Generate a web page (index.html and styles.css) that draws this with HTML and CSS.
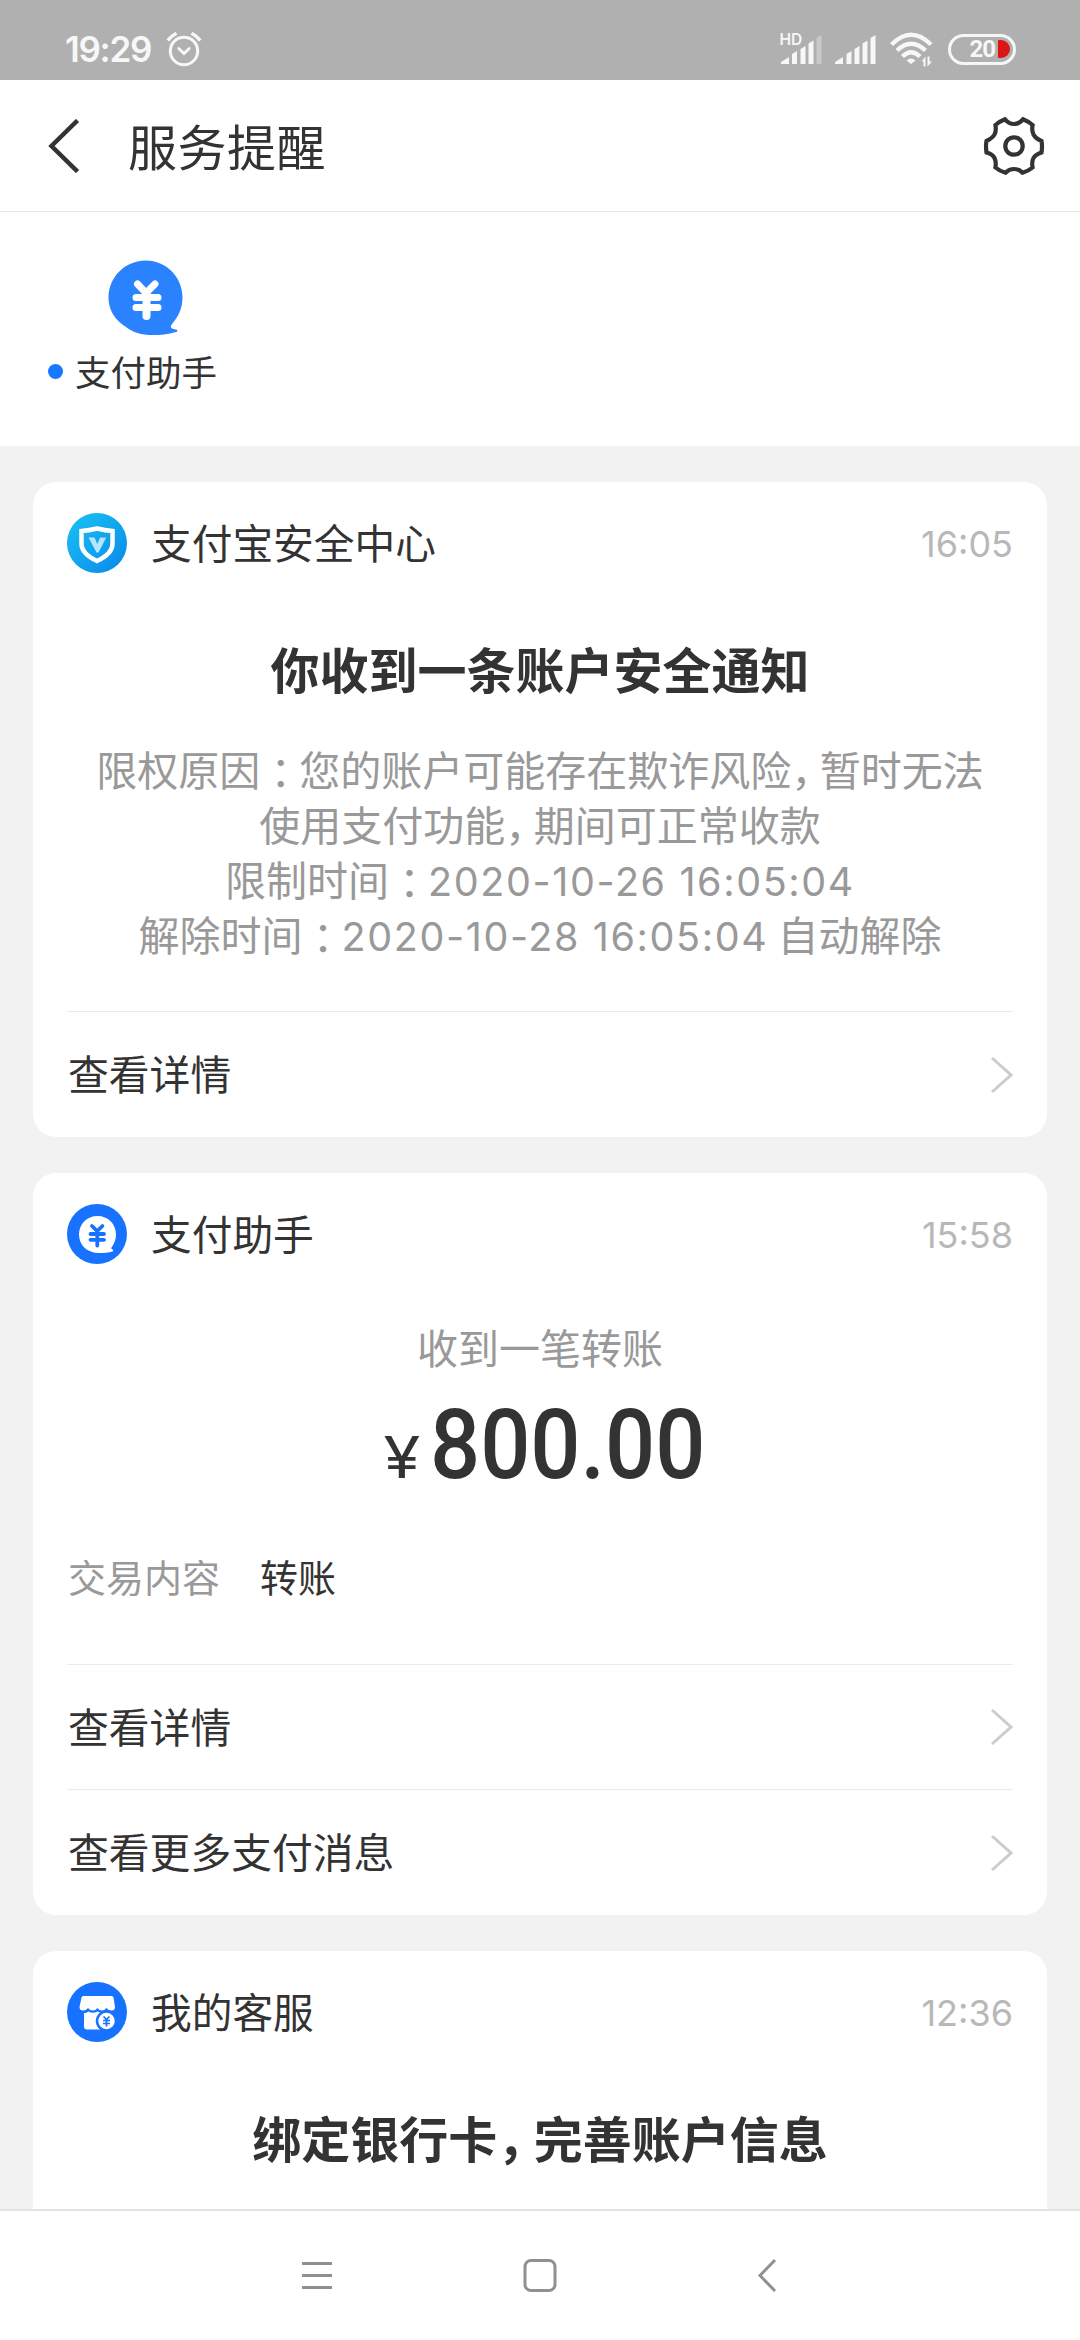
FILE: index.html
```html
<!DOCTYPE html>
<html lang="zh-CN">
<head>
<meta charset="utf-8">
<title>服务提醒</title>
<link rel="stylesheet" href="styles.css">
</head>
<body>
<div class="phone">
  <div class="status">
    <span class="clock">19:29</span>
    <svg class="alarm" width="36" height="36" viewBox="0 0 36 36" fill="none" stroke="#f7f7f7" stroke-width="3">
      <circle cx="18" cy="20" r="13.7"/><path d="M12.800 17.500l5.200 5 5.200-5" stroke-linecap="round"/><path d="M1.800 9.500Q5 5 10.500 2.200M34.200 9.500Q31 5 25.500 2.200" stroke-width="3.500"/>
    </svg>
    <div class="status-icons">
      <svg width="41" height="32" viewBox="0 0 41 32" fill="#f7f7f7">
        <path d="M1 31v-2l8-5v7zM12 31v-10l5-3v13zM20.500 31v-15l5-3v18zM28.500 31V10.500l5-3V31z"/><path d="M36.500 31V5l5-3v29z" opacity=".35"/>
        <text class="hd" x="-.500" y="12">HD</text>
      </svg>
      <svg width="41" height="32" viewBox="0 0 41 32" fill="#f7f7f7">
        <path d="M0 31v-2l8-5v7zM11.500 31v-10l5-3v13zM19.500 31v-15l5-3v18zM27.500 31V10.500l5-3V31zM35.500 31V5l5-3v29z"/>
      </svg>
      <svg class="wifi" width="43" height="35" viewBox="0 0 43 35" fill="none" stroke="#f7f7f7" stroke-width="4.300">
        <path d="M1.500 12.500Q21 -7 41 12.500M7 18.500Q21 5 35.500 18.500M12.500 24.500Q21 16 30 24.500"/>
        <path d="M16.500 28.500Q21 24.500 25.500 28.500L21 32z" fill="#f7f7f7" stroke="none"/>
        <path d="M31.500 29.500l4-5v10h-2v-5zM37.500 24.500h2v5h2.500l-4.500 5z" fill="#f7f7f7" stroke="none"/>
      </svg>
      <div class="battery"><span>20</span><i></i></div>
    </div>
  </div>

  <header class="bar">
    <svg width="32" height="54" viewBox="0 0 32 54" fill="none" stroke="#333" stroke-width="4.500"><path d="M29.500 1.500L3.500 27l26 25.500"/></svg>
    <h1>服务提醒</h1>
    <svg class="gear" width="64" height="64" viewBox="-32 -32 64 64" fill="none" stroke="#333" stroke-width="4.200">
      <circle r="8.700"/>
      <path d="M-9 -26.700Q-5 -22 0 -22T9 -26.700Q14.500 -24.500 18.600 -21Q17.500 -15.500 19.500 -11.500T27.500 -5Q28.500 0 27.500 6.500Q21.500 8.500 19.500 12T18.600 21.500Q14.500 25 8.500 26.700Q5 23 0 23T-8.500 26.700Q-14.500 25 -18.600 21.500Q-17.500 16 -19.500 12T-27.500 6.500Q-28.500 0 -27.500 -5Q-21.500 -8 -19.500 -11.500T-18.600 -21Q-14.500 -24.500 -9 -26.700z"/>
    </svg>
  </header>

  <section class="shortcuts">
    <div class="shortcut">
      <svg width="76" height="76" viewBox="0 0 76 76">
        <path fill="#2b82ff" d="M38 .500C58 .500 74.500 17 74.500 37.500c0 12-5 20-10.500 26.500-2.500 3.500-.500 5 4 5.500 2 .500 2 2 0 2.500C60 74.500 52 75 45 75 33 75 25 72.500 18 67 7 60 .500 50 .500 38 .500 17 17 .500 38 .500z"/>
        <path d="M29.500 24l8.500 9 9-9M28 37.500h22M28 47.500h22" fill="none" stroke="#fff" stroke-width="7" stroke-linecap="round"/>
        <path d="M38.500 33v23" fill="none" stroke="#fff" stroke-width="8" stroke-linecap="round"/>
      </svg>
      <div class="shortcut-label"><i class="dot"></i><span>支付助手</span></div>
    </div>
  </section>

  <main class="feed">
    <article class="card">
      <div class="card-head">
        <svg width="60" height="60" viewBox="0 0 60 60">
          <defs><linearGradient id="sky" x1="0" y1="0" x2="1" y2="1"><stop offset="0.100" stop-color="#18bdf3"/><stop offset="0.900" stop-color="#0b8eea"/></linearGradient></defs>
          <circle cx="30" cy="30" r="30" fill="url(#sky)"/>
          <path d="M30 15.500q8 2 15.500 2.500v13c0 8-7 13-15.500 17-8.500-4-15.500-9-15.500-17V18q7.500-.500 15.500-2.500z" fill="none" stroke="#fff" stroke-width="4.500"/>
          <path d="M21.500 24.500h6l2.700 6.500 3-6.500h6L31.500 39.500h-2z" fill="#b5e6ff"/>
        </svg>
        <h2>支付宝安全中心</h2><time>16:05</time>
      </div>
      <h3>你收到一条账户安全通知</h3>
      <p class="detail">限权原因<span class="colon" lang="zh-TW">：</span>您的账户可能存在欺诈风险<span class="comma">，</span>暂时无法<br>使用支付功能<span class="comma">，</span>期间可正常收款<br>限制时间<span class="colon" lang="zh-TW">：</span><span class="num">2020-10-26 16:05:04</span><br>解除时间<span class="colon" lang="zh-TW">：</span><span class="num">2020-10-28 16:05:04</span> 自动解除</p>
      <a class="row"><span>查看详情</span><svg class="chev" width="24" height="38" viewBox="0 0 24 38"><path d="M3 2l19 17L3 36"/></svg></a>
    </article>

    <article class="card">
      <div class="card-head">
        <svg width="60" height="60" viewBox="0 0 60 60">
          <circle cx="30" cy="30" r="30" fill="#1772ff"/>
          <path fill="#fff" d="M30.500 12C41 12 49 20 49 30.500c0 5.500-2 9.500-4.500 13-.500 1 0 1.500 1 2 1 .500 1 1.500 0 2C42 48.500 36 49 32 49 20 49 12 41 12 30.500 12 20 20 12 30.500 12z"/>
          <path d="M25 22l5.200 5 5.200-5M23.500 30h13.500M23.500 35.800h13.500M30.300 28v13.500" fill="none" stroke="#1772ff" stroke-width="3.800" stroke-linecap="round"/>
        </svg>
        <h2>支付助手</h2><time>15:58</time>
      </div>
      <p class="summary">收到一笔转账</p>
      <div class="amount"><span class="yen">¥</span><span class="sum">800.00</span></div>
      <dl><dt>交易内容</dt><dd>转账</dd></dl>
      <a class="row short"><span>查看详情</span><svg class="chev" width="24" height="38" viewBox="0 0 24 38"><path d="M3 2l19 17L3 36"/></svg></a>
      <a class="row"><span>查看更多支付消息</span><svg class="chev" width="24" height="38" viewBox="0 0 24 38"><path d="M3 2l19 17L3 36"/></svg></a>
    </article>

    <article class="card">
      <div class="card-head">
        <svg width="60" height="60" viewBox="0 0 60 60">
          <circle cx="30" cy="30" r="30" fill="#1772ff"/>
          <path fill="#fff" d="M16.500 14h28q1.500 0 2 1.500L48 25q0 3.500-3.500 3.500-3 0-5-2.500-2 2.500-4.700 2.500T30.500 26q-2 2.500-4.700 2.500T21 26q-2 2.500-5 2.500-3.500 0-3.500-3.500l2-9.500q.500-1.500 2-1.500z"/>
          <path fill="#fff" d="M17 31q2.500 0 4.500-1.500 4 2.500 9 0 4 2 8 1v17H20q-3 0-3-3z"/>
          <circle cx="39.500" cy="39" r="9.500" fill="#fff" stroke="#1772ff" stroke-width="2.500"/>
          <path d="M36.500 34.500l3 3 3-3M36 38.500h7M36 41.500h7M39.500 37.500v7" fill="none" stroke="#1772ff" stroke-width="1.700"/>
        </svg>
        <h2>我的客服</h2><time>12:36</time>
      </div>
      <h3>绑定银行卡<span class="comma">，</span>完善账户信息</h3>
    </article>
  </main>

  <nav class="keys">
    <svg width="34" height="36" viewBox="0 0 34 36"><path d="M2 5.500h30M2 17.500h30M2 29.500h30"/></svg>
    <svg width="34" height="36" viewBox="0 0 34 36"><rect x="2" y="2.500" width="30" height="30" rx="6"/></svg>
    <svg width="34" height="36" viewBox="0 0 34 36"><path d="M29 2L14 17.500l15 15.500"/></svg>
  </nav>
</div>
</body>
</html>
```

FILE: styles.css
```css
* { box-sizing: border-box; margin: 0; padding: 0; }
body { width: 1080px; font-family: "Noto Sans CJK SC", sans-serif; color: #333; background: #f2f2f2; }
svg { display: block; flex: none; }
h1, h2, h3 { font-weight: 400; white-space: nowrap; }
.phone { display: flex; flex-direction: column; width: 1080px; height: 2340px; overflow: hidden; }

.status { flex: none; display: flex; align-items: center; height: 80px; padding: 18px 64px 0 65px; background: #b0b0b0; color: #f7f7f7; }
.clock { width: 101px; font: 600 35px/40px Inter, sans-serif; letter-spacing: -1.3px; }
.status-icons { display: flex; align-items: center; margin-left: auto; }
.status-icons svg { margin-right: 14px; overflow: visible; }
.hd { font: 600 15.500px Inter, sans-serif; }
.status-icons .wifi { margin-right: 15px; }
.battery { display: flex; align-items: center; justify-content: flex-end; gap: 3px; width: 68px; height: 31px; padding-right: 3px; border: 3px solid #f7f7f7; border-radius: 16px; font: 700 24px/24px Roboto, sans-serif; letter-spacing: -1px; }
.battery i { width: 12px; height: 18px; background: #dc1515; border-radius: 1px 9px 9px 1px; }

.bar { flex: none; display: flex; align-items: center; height: 132px; padding: 0 34px 0 48px; background: #fff; border-bottom: 1px solid #e8e8e8; }
.bar h1 { margin: 0 0 2px 48px; font-size: 49px; line-height: 60px; letter-spacing: .5px; }
.gear { margin-left: auto; }

.shortcuts { flex: none; height: 234px; padding: 48px 0 0 48px; background: #fff; }
.shortcut { display: flex; flex-direction: column; width: 172px; }
.shortcut svg { margin-left: 60px; }
.shortcut-label { display: flex; align-items: center; gap: 12px; margin-top: 8px; font-size: 35.500px; line-height: 54px; white-space: nowrap; }
.dot { width: 15px; height: 15px; border-radius: 50%; background: #1677ff; }

.feed { flex: 1; display: flex; flex-direction: column; gap: 36px; min-height: 0; padding: 36px 33px 0; overflow: hidden; }
.card { flex: none; padding: 31px 34px 0; border-radius: 23px; background: #fff; }
.card-head { display: flex; align-items: center; height: 60px; }
.card-head h2 { margin-left: 24px; font-size: 40.700px; line-height: 56px; padding-bottom: 2px; }
.card-head time { margin: 2px 0 0 auto; font: 400 36px/60px Inter, sans-serif; color: #b8b8b8; }
.card h3 { height: 74px; margin-top: 58px; text-align: center; font-size: 49px; font-weight: 700; line-height: 74px; }
.card:last-child { height: 300px; }
.detail { height: 270px; margin-top: 36px; text-align: center; font-size: 41px; line-height: 55px; color: #999; white-space: nowrap; }
.colon { font-family: "Noto Sans CJK TC", sans-serif; line-height: 1px; vertical-align: -3px; letter-spacing: -2px; }
.comma { letter-spacing: -.300em; }
h3 .comma { letter-spacing: -.260em; }
.num { font: 400 39.500px/1px Inter, sans-serif; letter-spacing: 1.600px; }
.row { display: flex; align-items: center; justify-content: space-between; height: 126px; padding-left: 1px; border-top: 1px solid #ebebeb; font-size: 40.800px; line-height: 56px; }
.row span { padding-bottom: 4px; }
.row.short { height: 125px; }
.row.short span { padding-bottom: 2px; }
.chev { fill: none; stroke: #ccc; stroke-width: 3; }

.summary { margin-top: 52px; text-align: center; font-size: 41px; line-height: 60px; color: #999; }
.amount { display: flex; justify-content: center; align-items: baseline; height: 118px; margin-top: 10px; padding-left: 24px; line-height: 118px; }
.yen { font: 400 58px/118px Inter, sans-serif; transform: scaleX(1.15); }
.sum { font: 500 96px/118px Roboto, sans-serif; transform: scaleX(.92); }
dl { display: flex; gap: 40px; height: 160px; padding: 42px 0 0 1px; font-size: 38px; line-height: 60px; }
dt { color: #999; }

.keys { flex: none; display: flex; justify-content: space-between; height: 131px; padding: 47px 300px 0; background: #fff; border-top: 2px solid #e2e2e2; }
.keys svg { fill: none; stroke: #909090; stroke-width: 3; }
```
